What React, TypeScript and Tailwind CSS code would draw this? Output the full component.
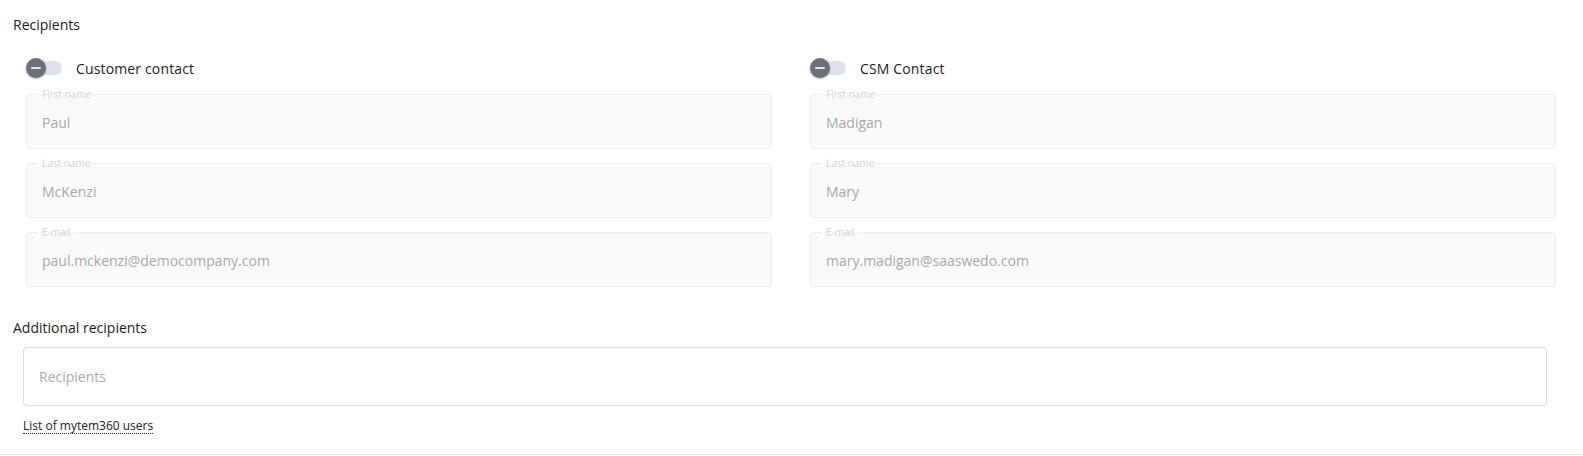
import React from 'react';

interface FieldProps {
  label: string;
  value: string;
}

const Field: React.FC<FieldProps> = ({ label, value }) => (
  <fieldset className="border border-[#ededed] rounded-[4px] bg-[#fafafa] px-[11px]">
    <legend className="px-[4px] text-[10px] leading-[10px] text-[#d2d2d2]">{label}</legend>
    <div className="h-[49px] pb-[3px] pl-[4px] flex items-center text-[14px] text-[#a8a8a8]">{value}</div>
  </fieldset>
);

const Toggle: React.FC<{ label: string }> = ({ label }) => (
  <div className="flex items-center h-[20px]">
    <div className="relative w-[36px] h-[20px] flex-shrink-0">
      <div className="absolute left-[2px] top-[3px] w-[34px] h-[14px] rounded-full bg-[#dfe1ea]" />
      <div className="absolute left-0 top-0 w-[20px] h-[20px] rounded-full bg-[#6d7079] shadow-[0_1px_2px_rgba(0,0,0,0.3)] flex items-center justify-center">
        <div className="w-[10px] h-[2px] bg-[#e4e4e4] rounded-full" />
      </div>
    </div>
    <span className="ml-[14px] text-[14px] text-[#1c1c1c] tracking-[0.15px]">{label}</span>
  </div>
);

const ContactColumn: React.FC<{ title: string; first: string; last: string; email: string }> = ({ title, first, last, email }) => (
  <div>
    <Toggle label={title} />
    <div className="mt-[11px] flex flex-col gap-[9px]">
      <Field label="First name" value={first} />
      <Field label="Last name" value={last} />
      <Field label="E-mail" value={email} />
    </div>
  </div>
);

export default function App() {
  return (
    <div className="w-full bg-white border-b border-[#e2e2e2] pb-[20px]" style={{ fontFamily: '"Open Sans", "Noto Sans", sans-serif' }}>
      <div className="pl-[13px] pt-[15px] text-[14px] leading-[20px] text-[#1c1c1c]">Recipients</div>

      <div className="grid grid-cols-2 gap-[38px] pl-[26px] pr-[27px] mt-[23px]">
        <ContactColumn title="Customer contact" first="Paul" last="McKenzi" email="paul.mckenzi@democompany.com" />
        <ContactColumn title="CSM Contact" first="Madigan" last="Mary" email="mary.madigan@saaswedo.com" />
      </div>

      <div className="pl-[13px] mt-[31px] text-[14px] leading-[20px] text-[#1c1c1c]">Additional recipients</div>

      <div className="pl-[23px] pr-[36px] mt-[9px]">
        <div className="h-[59px] border border-[#dcdcdc] rounded-[4px] flex items-center pl-[15px] text-[14px] text-[#a9a9a9]">
          Recipients
        </div>
        <div className="mt-[12px] flex leading-none">
          <span className="text-[12px] leading-[15px] text-[#222] border-b border-dotted border-[#333]">List of mytem360 users</span>
        </div>
      </div>
    </div>
  );
}
